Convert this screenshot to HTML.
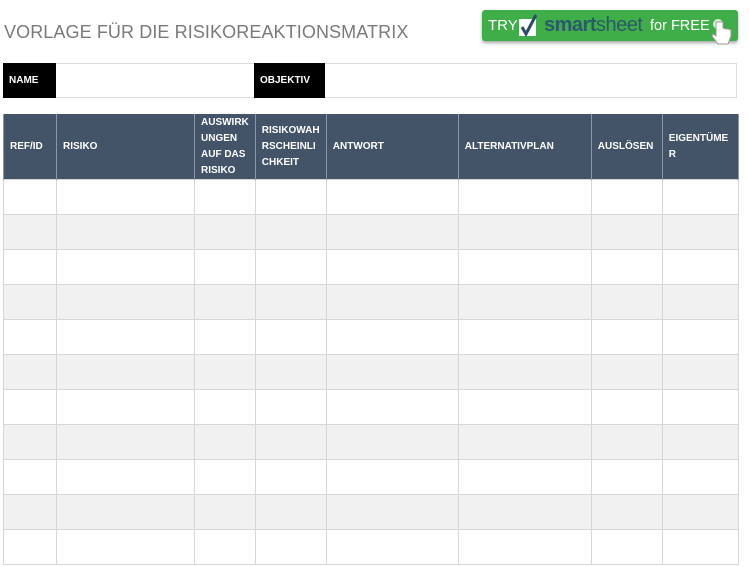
<!DOCTYPE html>
<html><head><meta charset="utf-8"><style>
*{margin:0;padding:0;box-sizing:border-box}
body{width:749px;height:567px;background:#fff;position:relative;overflow:hidden;font-family:"Liberation Sans",sans-serif}
.title{position:absolute;left:4px;top:22px;font-size:18px;color:#7a7a7a;letter-spacing:0.1px}
.btn{position:absolute;left:482px;top:10px;width:256px;height:31px;background:#3fae49;border-radius:3px;box-shadow:0 2px 3px rgba(0,0,0,.35);color:#fff;font-size:15px}
.btn span{position:absolute;top:7px;white-space:nowrap}
.nm{position:absolute;top:63px;height:35px;border:1px solid #ddd}
.blk{position:absolute;top:63px;height:35px;background:#000;color:#fff;font-size:10px;font-weight:bold;padding:12px 0 0 6px}
table{position:absolute;left:3px;top:114px;border-collapse:collapse;table-layout:fixed}
td{border:1px solid #d6d6d6;height:35px}
th{background:#435368;color:#fff;font-size:10px;font-weight:bold;text-align:left;padding:1px 6px 0;line-height:16px;height:64px;border-left:1px solid #8a96a8;border-right:1px solid #8a96a8}
tr:nth-child(odd) td{background:#f1f1f1}
</style></head><body>
<div class="title">VORLAGE FÜR DIE RISIKOREAKTIONSMATRIX</div>
<div class="btn">
<span style="left:6px">TRY</span>
<svg style="position:absolute;left:36px;top:3px" width="22" height="25" viewBox="0 0 22 25"><rect x="1" y="6" width="17" height="17" fill="#fff"/><path d="M4 14 L8 21 L18 2" stroke="#2b4a6b" stroke-width="3" fill="none"/></svg>
<span style="left:62px;top:4px;font-size:20px;color:#2b5a6b;letter-spacing:-0.5px"><b>smart</b>sheet</span>
<span style="left:168px;top:8px;font-size:14.5px">for FREE</span>
<svg style="position:absolute;left:228px;top:8px" width="26" height="32" viewBox="0 0 26 32"><circle cx="8" cy="6" r="5" fill="#fff" opacity=".8"/><path d="M6 4 v14 l-3-2 l-1 2 l6 8 h10 l3-8 v-6 l-3-1 l-2 0 l-3-1 v-6 z" fill="#fff" stroke="#999" stroke-width="1"/></svg>
</div>
<div class="nm" style="left:3px;width:734px"></div>
<div class="blk" style="left:3px;width:53px">NAME</div>
<div class="blk" style="left:254px;width:71px">OBJEKTIV</div>
<table>
<colgroup><col style="width:53px"><col style="width:138px"><col style="width:60px"><col style="width:71px"><col style="width:132px"><col style="width:133px"><col style="width:71px"><col style="width:76px"></colgroup>
<tr><th>REF/ID</th><th>RISIKO</th><th>AUSWIRK<br>UNGEN<br>AUF DAS<br>RISIKO</th><th>RISIKOWAH<br>RSCHEINLI<br>CHKEIT</th><th>ANTWORT</th><th>ALTERNATIVPLAN</th><th>AUSLÖSEN</th><th>EIGENTÜME<br>R</th></tr>
<tr><td></td><td></td><td></td><td></td><td></td><td></td><td></td><td></td></tr>
<tr><td></td><td></td><td></td><td></td><td></td><td></td><td></td><td></td></tr>
<tr><td></td><td></td><td></td><td></td><td></td><td></td><td></td><td></td></tr>
<tr><td></td><td></td><td></td><td></td><td></td><td></td><td></td><td></td></tr>
<tr><td></td><td></td><td></td><td></td><td></td><td></td><td></td><td></td></tr>
<tr><td></td><td></td><td></td><td></td><td></td><td></td><td></td><td></td></tr>
<tr><td></td><td></td><td></td><td></td><td></td><td></td><td></td><td></td></tr>
<tr><td></td><td></td><td></td><td></td><td></td><td></td><td></td><td></td></tr>
<tr><td></td><td></td><td></td><td></td><td></td><td></td><td></td><td></td></tr>
<tr><td></td><td></td><td></td><td></td><td></td><td></td><td></td><td></td></tr>
<tr><td></td><td></td><td></td><td></td><td></td><td></td><td></td><td></td></tr>
</table>
</body></html>
